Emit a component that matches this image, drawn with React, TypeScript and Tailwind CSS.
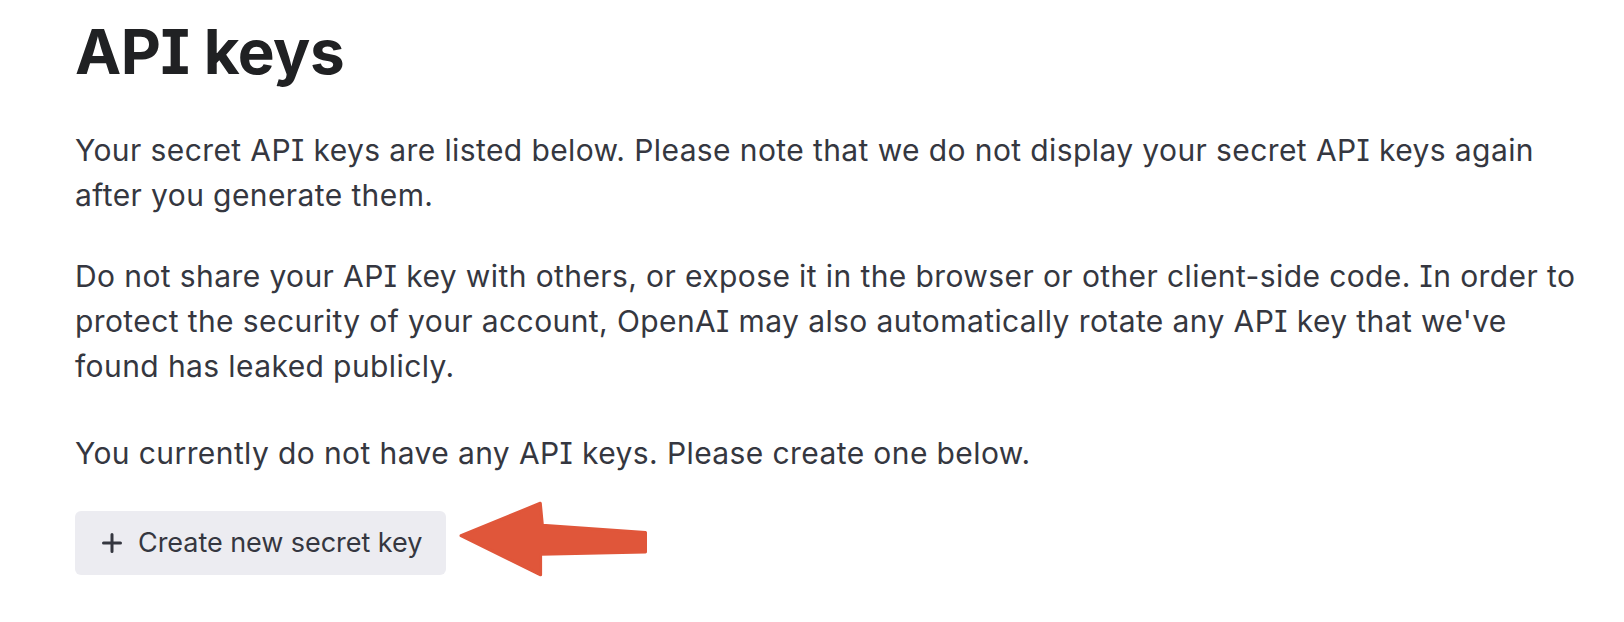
import React from "react";

export default function App() {
  return (
    <div className="w-[1624px] h-[622px] bg-white overflow-hidden pl-[75px] pt-[15px] font-['Inter','Noto_Sans',sans-serif] [font-feature-settings:'cv08']">
      <h1 className="text-[62px] leading-[74px] font-bold text-[#202123] tracking-[-0.5px]">
        API keys
      </h1>
      <div className="text-[30px] leading-[45px] text-[#353740] whitespace-nowrap tracking-[0.4px]">
        <p className="mt-[39px]">
          Your secret API keys are listed below. Please note that we do not display your secret API keys again
          <br />
          after you generate them.
        </p>
        <p className="mt-[36px]">
          Do not share your API key with others, or expose it in the browser or other client-side code. In order to
          <br />
          protect the security of your account, OpenAI may also automatically rotate any API key that we've
          <br />
          found has leaked publicly.
        </p>
        <p className="mt-[42px]">You currently do not have any API keys. Please create one below.</p>
      </div>
      <div className="mt-[35px] flex items-start">
        <button className="h-[64px] w-[371px] rounded-[6px] bg-[#ececf1] flex items-center pl-[27px] text-[27px] text-[#353740] tracking-[-0.05px]">
          <svg width="20" height="20" viewBox="0 0 20 20" className="shrink-0">
            <path d="M10 1.5V18.5M1.5 10H18.5" stroke="#353740" strokeWidth="3" strokeLinecap="round" />
          </svg>
          <span className="ml-[16px]">Create new secret key</span>
        </button>
        <svg width="196" height="82" viewBox="0 0 196 82" className="ml-[10px] mt-[-12px] shrink-0">
          <path
            d="M5 36.7 L84.3 4.2 L86.4 26.3 L189.5 33.6 L189.5 53 L84.6 55.2 L84.6 75.8 Z"
            fill="#E0563A"
            stroke="#E0563A"
            strokeWidth="3"
            strokeLinejoin="round"
          />
        </svg>
      </div>
    </div>
  );
}
